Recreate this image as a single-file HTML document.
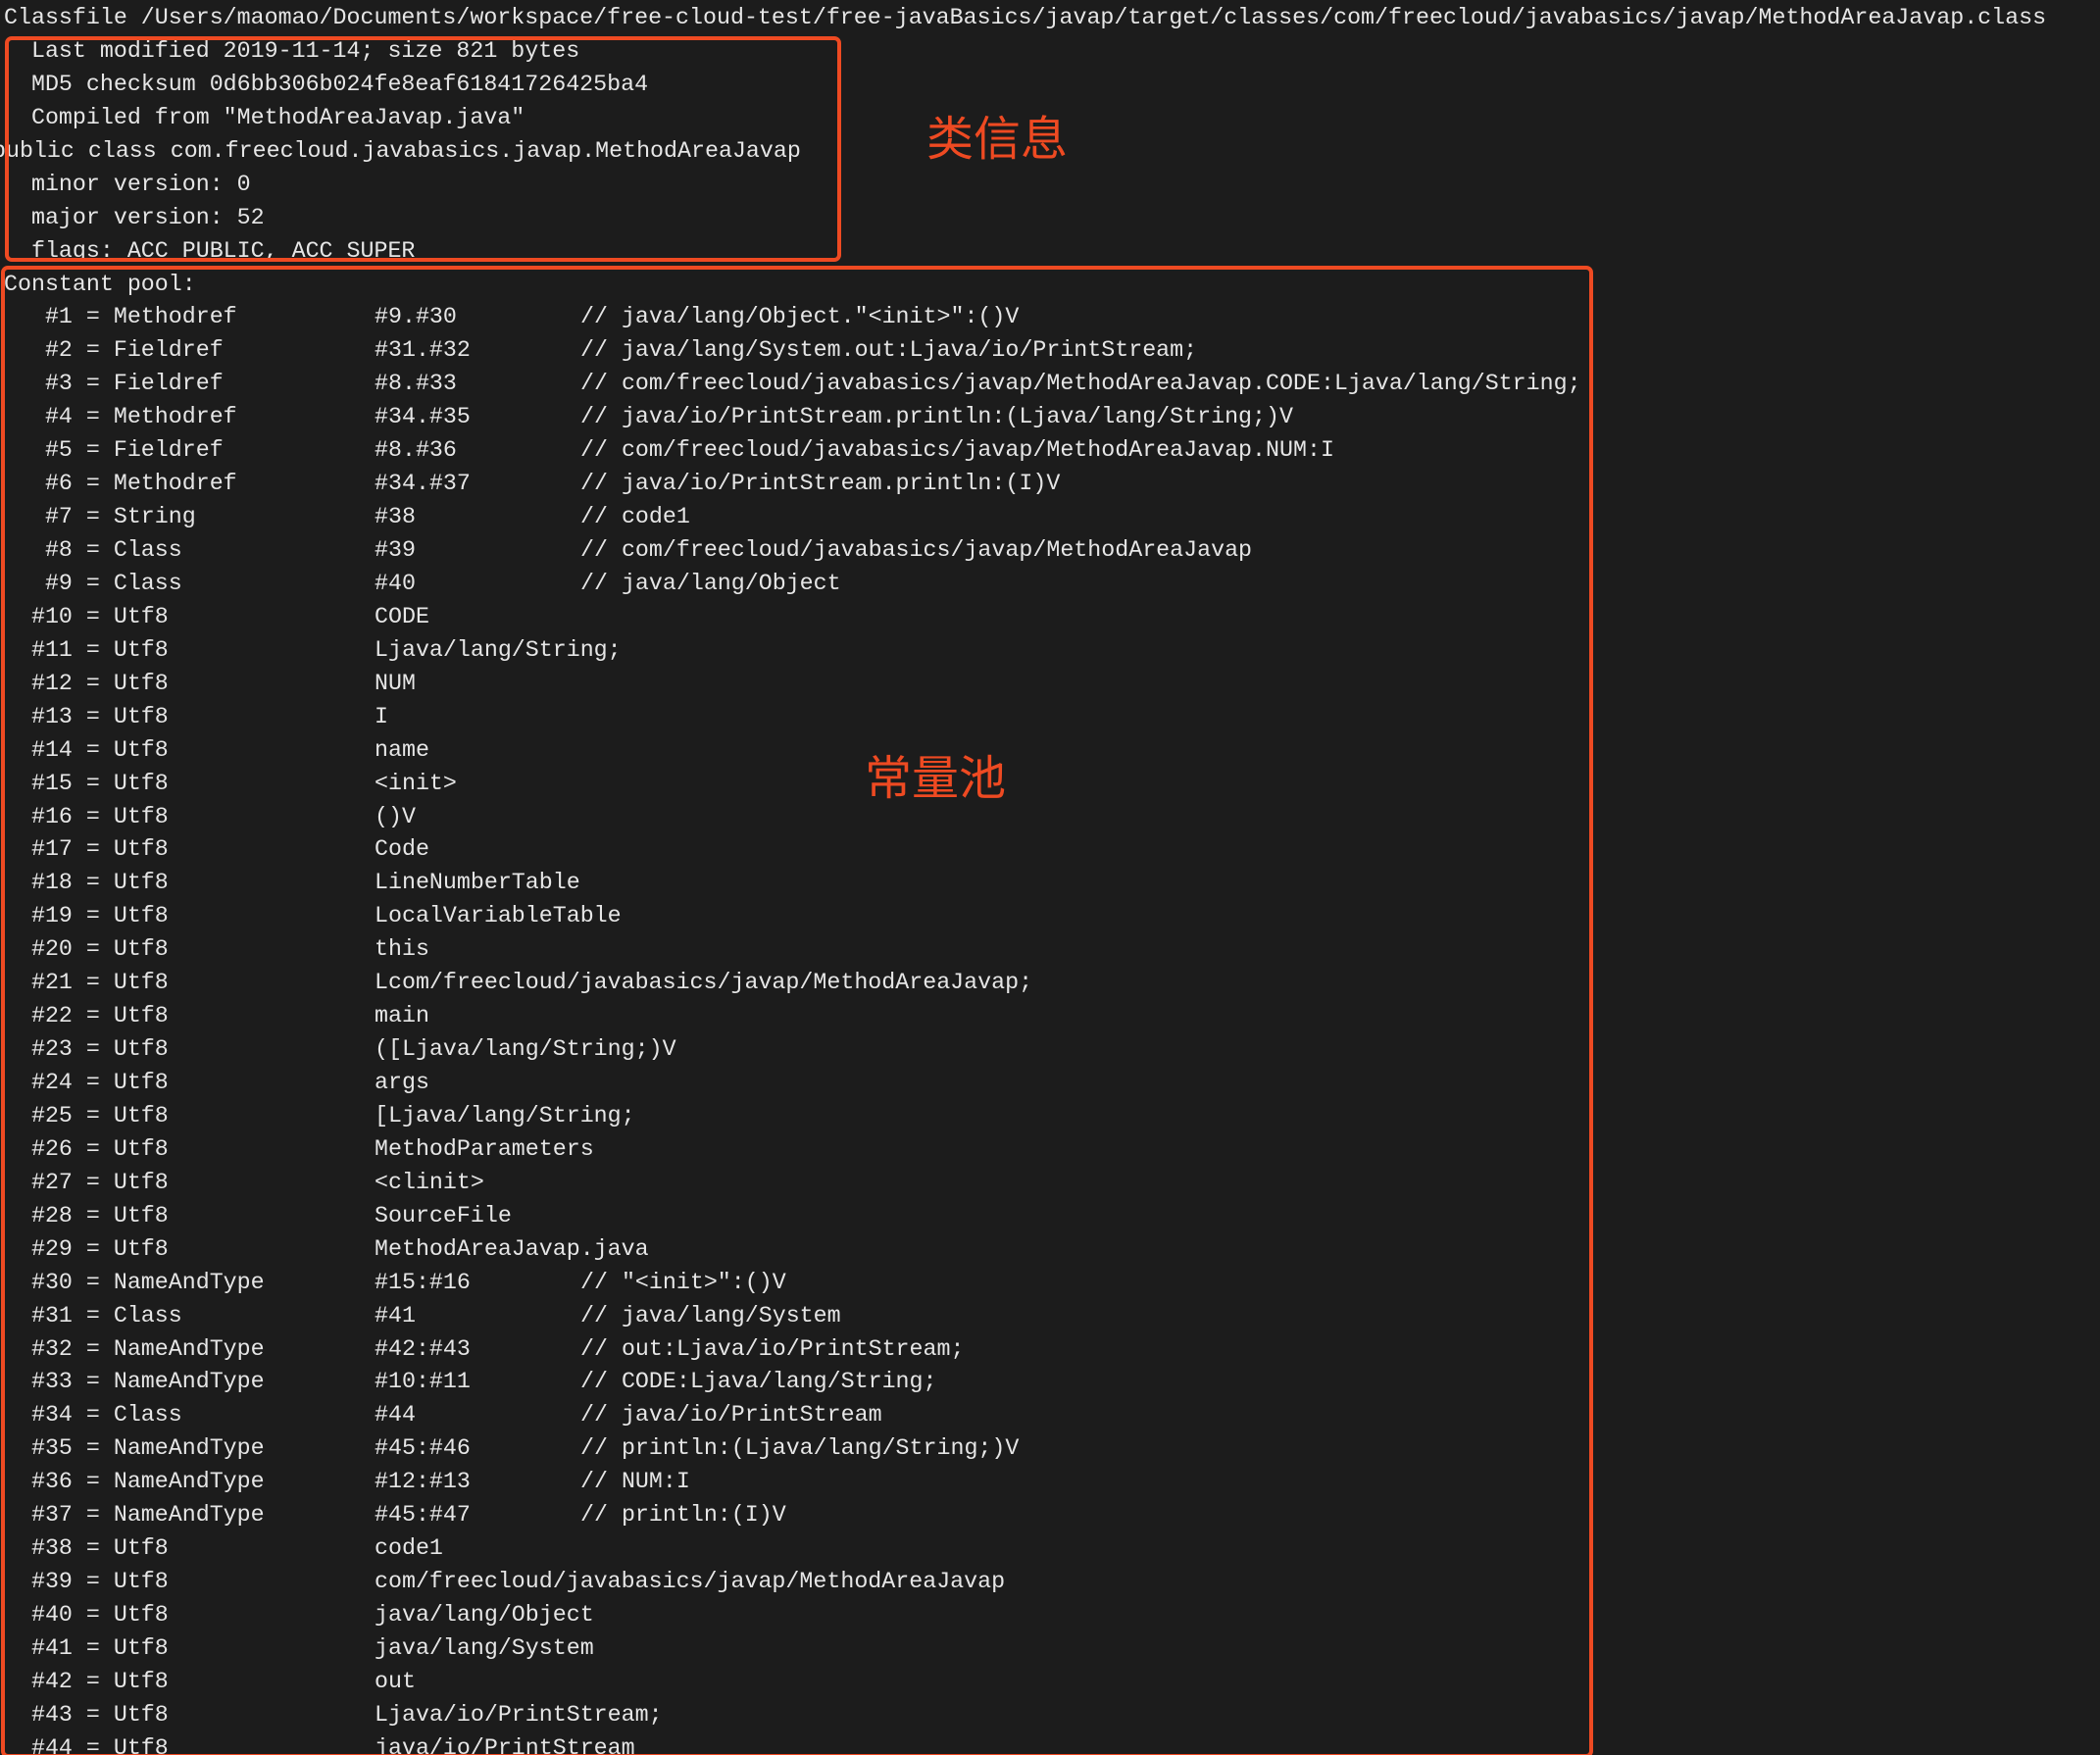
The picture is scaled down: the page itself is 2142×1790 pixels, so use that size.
<!DOCTYPE html>
<html><head><meta charset="utf-8"><style>
html,body{margin:0;padding:0;background:#1c1c1c;width:2142px;height:1790px;overflow:hidden;position:relative}
.t{position:absolute;left:4px;top:2px;font-family:"Liberation Mono",monospace;font-size:23.3px;line-height:33.95px;color:#e6e6e6;white-space:normal}
.r{position:relative;height:33.95px;white-space:pre}
.r span{position:absolute;top:0}
.b{left:378px}.c{left:588px}
.box{position:absolute;border:4px solid #ee4a22;border-radius:7px;box-sizing:border-box}
.lab{position:absolute;font-family:"Liberation Sans","Noto Sans CJK SC",sans-serif;font-size:48px;color:#ee4a22;line-height:1}
</style></head><body>
<div class="t"><div class="r">Classfile /Users/maomao/Documents/workspace/free-cloud-test/free-javaBasics/javap/target/classes/com/freecloud/javabasics/javap/MethodAreaJavap.class</div><div class="r">  Last modified 2019-11-14; size 821 bytes</div><div class="r">  MD5 checksum 0d6bb306b024fe8eaf61841726425ba4</div><div class="r">  Compiled from "MethodAreaJavap.java"</div><div class="r"><span style="left:-12px">public class com.freecloud.javabasics.javap.MethodAreaJavap</span></div><div class="r">  minor version: 0</div><div class="r">  major version: 52</div><div class="r">  flags: ACC_PUBLIC, ACC_SUPER</div><div class="r">Constant pool:</div><div class="r">   #1 = Methodref<span class="b">#9.#30</span><span class="c">// java/lang/Object."&lt;init&gt;":()V</span></div><div class="r">   #2 = Fieldref<span class="b">#31.#32</span><span class="c">// java/lang/System.out:Ljava/io/PrintStream;</span></div><div class="r">   #3 = Fieldref<span class="b">#8.#33</span><span class="c">// com/freecloud/javabasics/javap/MethodAreaJavap.CODE:Ljava/lang/String;</span></div><div class="r">   #4 = Methodref<span class="b">#34.#35</span><span class="c">// java/io/PrintStream.println:(Ljava/lang/String;)V</span></div><div class="r">   #5 = Fieldref<span class="b">#8.#36</span><span class="c">// com/freecloud/javabasics/javap/MethodAreaJavap.NUM:I</span></div><div class="r">   #6 = Methodref<span class="b">#34.#37</span><span class="c">// java/io/PrintStream.println:(I)V</span></div><div class="r">   #7 = String<span class="b">#38</span><span class="c">// code1</span></div><div class="r">   #8 = Class<span class="b">#39</span><span class="c">// com/freecloud/javabasics/javap/MethodAreaJavap</span></div><div class="r">   #9 = Class<span class="b">#40</span><span class="c">// java/lang/Object</span></div><div class="r">  #10 = Utf8<span class="b">CODE</span></div><div class="r">  #11 = Utf8<span class="b">Ljava/lang/String;</span></div><div class="r">  #12 = Utf8<span class="b">NUM</span></div><div class="r">  #13 = Utf8<span class="b">I</span></div><div class="r">  #14 = Utf8<span class="b">name</span></div><div class="r">  #15 = Utf8<span class="b">&lt;init&gt;</span></div><div class="r">  #16 = Utf8<span class="b">()V</span></div><div class="r">  #17 = Utf8<span class="b">Code</span></div><div class="r">  #18 = Utf8<span class="b">LineNumberTable</span></div><div class="r">  #19 = Utf8<span class="b">LocalVariableTable</span></div><div class="r">  #20 = Utf8<span class="b">this</span></div><div class="r">  #21 = Utf8<span class="b">Lcom/freecloud/javabasics/javap/MethodAreaJavap;</span></div><div class="r">  #22 = Utf8<span class="b">main</span></div><div class="r">  #23 = Utf8<span class="b">([Ljava/lang/String;)V</span></div><div class="r">  #24 = Utf8<span class="b">args</span></div><div class="r">  #25 = Utf8<span class="b">[Ljava/lang/String;</span></div><div class="r">  #26 = Utf8<span class="b">MethodParameters</span></div><div class="r">  #27 = Utf8<span class="b">&lt;clinit&gt;</span></div><div class="r">  #28 = Utf8<span class="b">SourceFile</span></div><div class="r">  #29 = Utf8<span class="b">MethodAreaJavap.java</span></div><div class="r">  #30 = NameAndType<span class="b">#15:#16</span><span class="c">// "&lt;init&gt;":()V</span></div><div class="r">  #31 = Class<span class="b">#41</span><span class="c">// java/lang/System</span></div><div class="r">  #32 = NameAndType<span class="b">#42:#43</span><span class="c">// out:Ljava/io/PrintStream;</span></div><div class="r">  #33 = NameAndType<span class="b">#10:#11</span><span class="c">// CODE:Ljava/lang/String;</span></div><div class="r">  #34 = Class<span class="b">#44</span><span class="c">// java/io/PrintStream</span></div><div class="r">  #35 = NameAndType<span class="b">#45:#46</span><span class="c">// println:(Ljava/lang/String;)V</span></div><div class="r">  #36 = NameAndType<span class="b">#12:#13</span><span class="c">// NUM:I</span></div><div class="r">  #37 = NameAndType<span class="b">#45:#47</span><span class="c">// println:(I)V</span></div><div class="r">  #38 = Utf8<span class="b">code1</span></div><div class="r">  #39 = Utf8<span class="b">com/freecloud/javabasics/javap/MethodAreaJavap</span></div><div class="r">  #40 = Utf8<span class="b">java/lang/Object</span></div><div class="r">  #41 = Utf8<span class="b">java/lang/System</span></div><div class="r">  #42 = Utf8<span class="b">out</span></div><div class="r">  #43 = Utf8<span class="b">Ljava/io/PrintStream;</span></div><div class="r">  #44 = Utf8<span class="b">java/io/PrintStream</span></div></div>
<div class="box" style="left:5px;top:37px;width:853px;height:230px"></div>
<div class="box" style="left:1px;top:271px;width:1624px;height:1522px"></div>
<div class="lab" style="left:945px;top:119px">类信息</div>
<div class="lab" style="left:882px;top:771px">常量池</div>
</body></html>
